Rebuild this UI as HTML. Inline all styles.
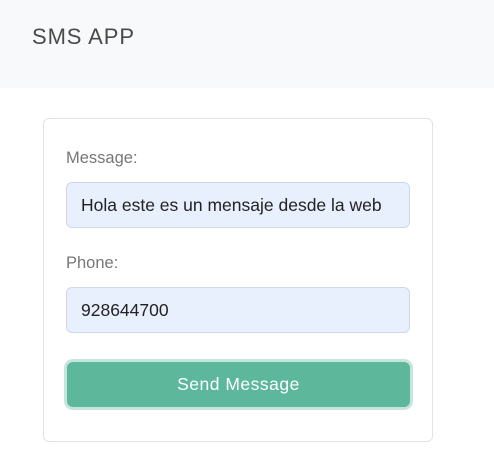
<!DOCTYPE html>
<html><head><style>
body{margin:0;width:494px;height:461px;background:#fff;font-family:"Liberation Sans",sans-serif;position:relative;overflow:hidden}
.hdr{position:absolute;left:0;top:0;width:494px;height:88px;background:#f8f9fa}
.brand{position:absolute;left:32px;top:24px;font-size:22px;color:#4a4a4a;letter-spacing:0.9px}
.card{position:absolute;left:43px;top:118px;width:390px;height:324px;border:1px solid #e3e3e3;border-radius:6px;box-sizing:border-box}
.lbl{position:absolute;left:66px;font-size:16.5px;color:#777}
.inp{position:absolute;left:66px;width:344px;height:46px;background:#e8f0fe;border:1px solid #cfd8e8;border-radius:6px;box-sizing:border-box;font-size:17.5px;color:#222;padding-left:14px;line-height:44px}
.btn{position:absolute;left:67px;top:362px;width:343px;height:45px;background:#5cb79b;border-radius:6px;box-shadow:0 0 0 3px #c6e6dc;color:#fff;font-size:17.5px;text-align:center;line-height:45px;letter-spacing:0.5px}
</style></head><body>
<div class="hdr"><div class="brand">SMS APP</div></div>
<div class="card"></div>
<div class="lbl" style="top:149px">Message:</div>
<div class="inp" style="top:182px">Hola este es un mensaje desde la web</div>
<div class="lbl" style="top:254px">Phone:</div>
<div class="inp" style="top:287px">928644700</div>
<div class="btn">Send Message</div>
</body></html>
